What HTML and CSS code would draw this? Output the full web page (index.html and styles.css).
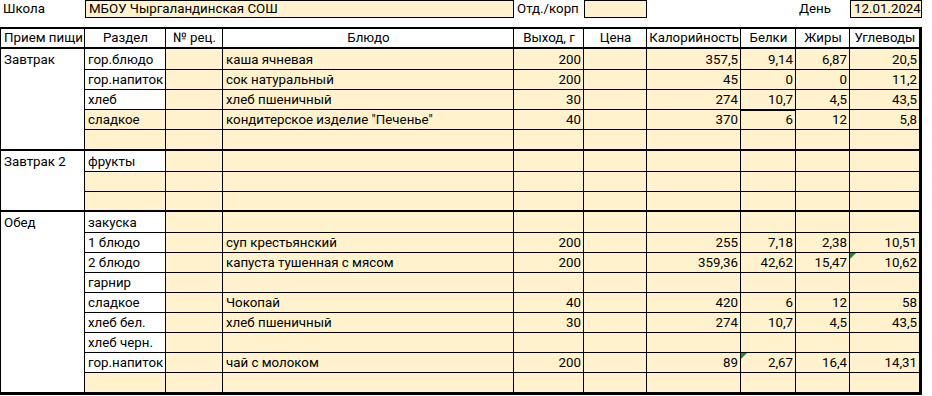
FILE: index.html
```html
<!DOCTYPE html>
<html lang="ru">
<head>
<meta charset="utf-8">
<title>Меню</title>
<link rel="stylesheet" href="styles.css">
</head>
<body>
<div class="sheet">
  <!-- row 1 -->
  <div class="t">Школа</div>
  <div class="t box cspan3">МБОУ Чыргаландинская СОШ</div>
  <div class="t">Отд./корп</div>
  <div class="t box"></div>
  <div class="t"></div>
  <div class="t"></div>
  <div class="t">День</div>
  <div class="t box">12.01.2024</div>
  <!-- row 2 -->
  <div class="gap"></div>
  <!-- header -->
  <div class="c h first">Прием пищи</div>
  <div class="c h ctr">Раздел</div>
  <div class="c h ctr">№ рец.</div>
  <div class="c h ctr">Блюдо</div>
  <div class="c h ctr">Выход, г</div>
  <div class="c h ctr">Цена</div>
  <div class="c h ctr">Калорийность</div>
  <div class="c h ctr">Белки</div>
  <div class="c h ctr">Жиры</div>
  <div class="c h ctr endc">Углеводы</div>

  <!-- Завтрак -->
  <div class="c w first meal rspan5 sec">Завтрак</div>
  <div class="c w">гор.блюдо</div><div class="c"></div><div class="c">каша ячневая</div><div class="c num">200</div><div class="c"></div><div class="c num">357,5</div><div class="c num">9,14</div><div class="c num">6,87</div><div class="c num endc">20,5</div>
  <div class="c w">гор.напиток</div><div class="c"></div><div class="c">сок натуральный</div><div class="c num">200</div><div class="c"></div><div class="c num">45</div><div class="c num">0</div><div class="c num">0</div><div class="c num endc">11,2</div>
  <div class="c w">хлеб</div><div class="c"></div><div class="c">хлеб пшеничный</div><div class="c num">30</div><div class="c"></div><div class="c num">274</div><div class="c num">10,7</div><div class="c num">4,5</div><div class="c num endc">43,5</div>
  <div class="c">сладкое</div><div class="c"></div><div class="c">кондитерское изделие &quot;Печенье&quot;</div><div class="c num">40</div><div class="c"></div><div class="c num">370</div><div class="c num tb">6</div><div class="c num">12</div><div class="c num endc">5,8</div>
  <div class="c sec"></div><div class="c sec"></div><div class="c sec"></div><div class="c sec"></div><div class="c sec"></div><div class="c sec"></div><div class="c sec"></div><div class="c sec"></div><div class="c sec endc"></div>

  <!-- Завтрак 2 -->
  <div class="c w first meal rspan3 sec">Завтрак 2</div>
  <div class="c w">фрукты</div><div class="c"></div><div class="c"></div><div class="c"></div><div class="c"></div><div class="c"></div><div class="c"></div><div class="c"></div><div class="c endc"></div>
  <div class="c"></div><div class="c"></div><div class="c"></div><div class="c"></div><div class="c"></div><div class="c"></div><div class="c"></div><div class="c"></div><div class="c endc"></div>
  <div class="c sec"></div><div class="c sec"></div><div class="c sec"></div><div class="c sec"></div><div class="c sec"></div><div class="c sec"></div><div class="c sec"></div><div class="c sec"></div><div class="c sec endc"></div>

  <!-- Обед -->
  <div class="c w first meal rspan9 last">Обед</div>
  <div class="c w">закуска</div><div class="c"></div><div class="c"></div><div class="c"></div><div class="c"></div><div class="c"></div><div class="c"></div><div class="c"></div><div class="c endc"></div>
  <div class="c w">1 блюдо</div><div class="c"></div><div class="c">суп крестьянский</div><div class="c num">200</div><div class="c"></div><div class="c num">255</div><div class="c num">7,18</div><div class="c num">2,38</div><div class="c num endc">10,51</div>
  <div class="c w">2 блюдо</div><div class="c"></div><div class="c">капуста тушенная с мясом</div><div class="c num">200</div><div class="c"></div><div class="c num">359,36</div><div class="c num">42,62</div><div class="c num">15,47</div><div class="c num endc flag">10,62</div>
  <div class="c w">гарнир</div><div class="c"></div><div class="c"></div><div class="c"></div><div class="c"></div><div class="c"></div><div class="c"></div><div class="c"></div><div class="c endc"></div>
  <div class="c w">сладкое</div><div class="c"></div><div class="c">Чокопай</div><div class="c num">40</div><div class="c"></div><div class="c num">420</div><div class="c num">6</div><div class="c num">12</div><div class="c num endc">58</div>
  <div class="c w">хлеб бел.</div><div class="c"></div><div class="c">хлеб пшеничный</div><div class="c num">30</div><div class="c"></div><div class="c num">274</div><div class="c num">10,7</div><div class="c num">4,5</div><div class="c num endc">43,5</div>
  <div class="c w">хлеб черн.</div><div class="c"></div><div class="c"></div><div class="c"></div><div class="c"></div><div class="c"></div><div class="c"></div><div class="c"></div><div class="c endc"></div>
  <div class="c w">гор.напиток</div><div class="c"></div><div class="c">чай с молоком</div><div class="c num">200</div><div class="c"></div><div class="c num">89</div><div class="c num flag">2,67</div><div class="c num">16,4</div><div class="c num endc">14,31</div>
  <div class="c last"></div><div class="c last"></div><div class="c last"></div><div class="c last"></div><div class="c last"></div><div class="c last"></div><div class="c last"></div><div class="c last"></div><div class="c last endc"></div>
</div>
</body>
</html>
```
FILE: styles.css
```css
html, body {
  margin: 0;
  padding: 0;
  background: #ffffff;
}

.sheet {
  display: grid;
  grid-template-columns: 85px 81px 57px 291px 70px 63px 94px 55px 54px 72px;
  grid-template-rows: 18px 9px 22px 21px 20px 20px 20px 21px 21px 20px 20px 21px 20px 20px 20px 20px 20px 20px 20px 22px;
  font-family: Roboto, "Liberation Sans", sans-serif;
  font-size: 13.3px;
  line-height: 16px;
  color: #000;
}

.t {
  box-sizing: border-box;
  display: flex;
  align-items: flex-end;
  padding: 0 2px 1px 3px;
  white-space: nowrap;
  overflow: hidden;
}

.box {
  border: 1px solid #000;
  background: #fff2cc;
  padding-bottom: 0;
}

.cspan3 {
  grid-column: span 3;
}

.gap {
  grid-column: 1 / -1;
}

.c {
  box-sizing: border-box;
  position: relative;
  display: flex;
  align-items: flex-end;
  padding: 0 2px 1px 3px;
  border-right: 1px solid #000;
  border-bottom: 1px solid #000;
  background: #fff2cc;
  white-space: nowrap;
  overflow: hidden;
}

.w {
  background: #ffffff;
}

.h {
  background: #ffffff;
  border-top: 2px solid #000;
  border-bottom-width: 2px;
}

.first {
  border-left: 1px solid #000;
}

.endc {
  border-right-width: 3px;
}

.ctr {
  justify-content: center;
}

.num {
  justify-content: flex-end;
}

.sec {
  border-bottom-width: 2px;
}

.last {
  border-bottom-width: 3px;
}

.meal {
  align-items: flex-start;
  padding-top: 3px;
}

.rspan5 { grid-row: span 5; }
.rspan3 { grid-row: span 3; }
.rspan9 { grid-row: span 9; }

.tb {
  box-shadow: inset 0 1px 0 #000;
}

.flag::before {
  content: "";
  position: absolute;
  left: 0;
  top: 0;
  border-top: 6px solid #1e8a32;
  border-right: 6px solid transparent;
}
```
